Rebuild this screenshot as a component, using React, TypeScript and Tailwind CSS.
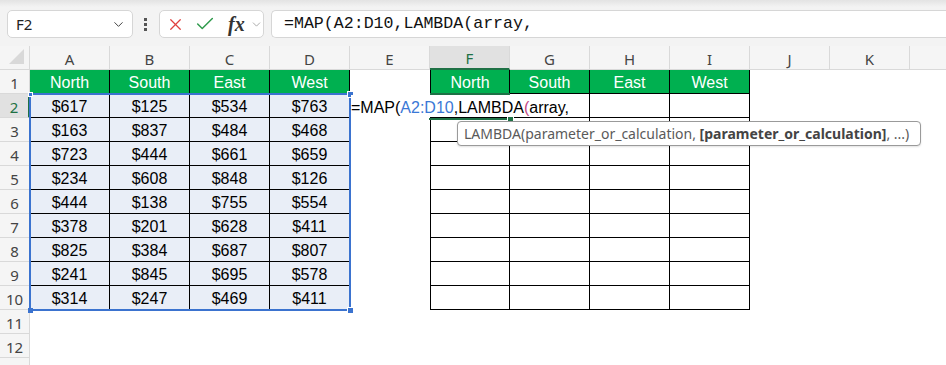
import { Fragment } from "react";
import { Check, ChevronDown, X } from "lucide-react";

const cols = ["A", "B", "C", "D", "E", "F", "G", "H", "I", "J", "K", "L"];
const regions = ["North", "South", "East", "West"];
const values = [
  [617, 125, 534, 763],
  [163, 837, 484, 468],
  [723, 444, 661, 659],
  [234, 608, 848, 126],
  [444, 138, 755, 554],
  [378, 201, 628, 411],
  [825, 384, 687, 807],
  [241, 845, 695, 578],
  [314, 247, 469, 411],
];
const rows = Array.from({ length: 13 }, (_, i) => i + 1);

const ui = "font-['Segoe_UI','Noto_Sans',sans-serif]";
const cellFont = "font-['Liberation_Sans',Arial,sans-serif] text-[16px]";

function Cell({ r, ci }: { r: number; ci: number }) {
  const inLeft = ci <= 3 && r <= 10;
  const inRight = ci >= 5 && ci <= 8 && r <= 10;

  if (!inLeft && !inRight) return <div />;

  let cls = "flex items-center justify-center pt-[3px] border-r border-b border-black " + cellFont;
  if (ci === 5) cls += " border-l";
  let text = "";

  if (r === 1) {
    cls += " bg-[#00b050] text-white";
    text = regions[inLeft ? ci : ci - 5];
  } else if (inLeft) {
    cls += " bg-[#e9eef7] text-black";
    text = `$${values[r - 2][ci]}`;
  } else {
    cls += " bg-white";
  }

  return <div className={cls}>{text}</div>;
}

export default function App() {
  return (
    <div className="w-[946px] h-[365px] overflow-hidden bg-white">
      {/* formula bar */}
      <div className="flex items-start h-[46px] pt-[10px] pl-[7px] bg-[linear-gradient(#e3e3e3,#f3f3f3_7px)]">
        <div className={"flex items-center justify-between w-[126px] h-[28px] pl-[8px] pr-[6px] bg-white border border-[#d6d6d6] rounded-[5px] text-[15px] text-[#222] " + ui}>
          <span>F2</span>
          <ChevronDown size={15} strokeWidth={1.6} className="text-[#444]" />
        </div>

        <div className="flex flex-col gap-[2px] ml-[11px] mt-[8px] w-[3px]">
          <span className="size-[3px] bg-[#555]" />
          <span className="size-[3px] bg-[#555]" />
          <span className="size-[3px] bg-[#555]" />
        </div>

        <div className="flex items-center w-[105px] h-[28px] ml-[12px] pl-[6px] bg-white border border-[#d6d6d6] rounded-[5px]">
          <X size={19} strokeWidth={1.6} className="text-[#e0403f]" />
          <Check size={22} strokeWidth={1.6} className="ml-[9px] text-[#2f9a4c]" />
          <span className="ml-[12px] font-['Liberation_Serif',serif] italic font-bold text-[20px] leading-none text-[#333]">fx</span>
          <ChevronDown size={13} strokeWidth={1.5} className="ml-[5px] text-[#999]" />
        </div>

        <div className="flex-1 flex items-center h-[28px] ml-[7px] pl-[12px] bg-white border border-r-0 border-[#d6d6d6] rounded-l-[5px] font-['Liberation_Mono',monospace] text-[16.6px] text-[#111]">
          =MAP(A2:D10,LAMBDA(array,
        </div>
      </div>

      {/* sheet */}
      <div className="relative">
        <div className="grid grid-cols-[30px_repeat(12,80px)] auto-rows-[24px]">
          <div className="relative bg-[#f5f5f5] border-r border-b border-[#d9d9d9]">
            <svg width="18" height="18" className="absolute right-[3px] bottom-[3px]">
              <polygon points="16,1 16,16 1,16" fill="#d9d9d9" />
            </svg>
          </div>
          {cols.map((c) => (
            <div
              key={c}
              className={
                "flex items-center justify-center pt-[3px] border-r border-b border-[#d9d9d9] text-[15px] " +
                ui +
                (c === "F"
                  ? " bg-[#e1e1e1] text-[#1e7145] border-b-2 border-b-[#1e7145]"
                  : " bg-[#f5f5f5] text-[#444]")
              }
            >
              {c === "L" ? "" : c}
            </div>
          ))}

          {rows.map((r) => (
            <Fragment key={r}>
              <div
                className={
                  "flex items-center justify-center pt-[3px] border-b border-[#d9d9d9] text-[15px] " +
                  ui +
                  (r === 2
                    ? " bg-[#e1e1e1] text-[#1e7145] border-r-2 border-r-[#1e7145]"
                    : " bg-[#f5f5f5] text-[#444] border-r")
                }
              >
                {r <= 12 ? r : ""}
              </div>
              {cols.map((c, ci) => (
                <Cell key={c} r={r} ci={ci} />
              ))}
            </Fragment>
          ))}
        </div>

        {/* selection A2:D10 */}
        <div className="absolute left-[29px] top-[47px] w-[322px] h-[218px] border-2 border-[#3b73cf]" />
        <div className="absolute left-[28px] top-[46px] size-[5px] bg-[#3b73cf] border border-white" />
        <div className="absolute left-[347px] top-[45px] size-[7px] bg-[#3b73cf] border border-white" />
        <div className="absolute left-[347px] top-[261px] size-[7px] bg-[#3b73cf] border border-white" />
        <div className="absolute left-[28px] top-[262px] size-[5px] bg-[#3b73cf]" />

        {/* active cell F2 */}
        <div className="absolute left-[430px] top-[47px] w-[80px] h-[2px] bg-[#1e7145]" />
        <div className="absolute left-[429px] top-[72px] w-[80px] h-[2px] bg-[#1e7145]" />
        <div className="absolute left-[507px] top-[70px] size-[7px] bg-[#1e7145] border border-white" />

        {/* in-cell editing text */}
        <div className={"absolute left-[351px] top-[49px] w-[238px] h-[22px] pt-[2px] bg-white leading-[22px] whitespace-nowrap text-black " + cellFont}>
          =MAP(<span className="text-[#3a78d6]">A2:D10</span>,LAMBDA<span className="text-[#c2447f]">(</span>array,
        </div>

        {/* function tooltip */}
        <div className={"absolute left-[457px] top-[75px] w-[464px] h-[25px] flex items-center pl-[6px] bg-white border border-[#9a9a9a] rounded-[4px] shadow-[0_1px_2px_rgba(0,0,0,0.12)] text-[14px] text-[#5a5a5a] whitespace-nowrap " + ui}>
          LAMBDA(parameter_or_calculation,&nbsp;<b className="font-bold text-[#444]">[parameter_or_calculation]</b>, ...)
        </div>
      </div>
    </div>
  );
}
